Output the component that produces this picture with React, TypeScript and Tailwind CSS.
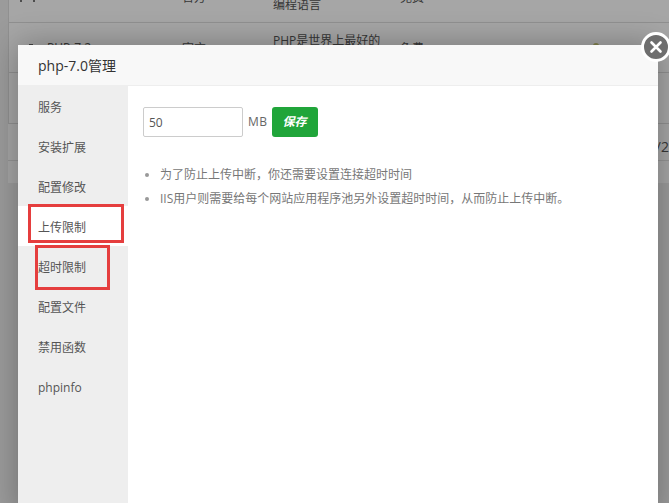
const FONT = "font-['Open_Sans','Noto_Sans_CJK_SC',sans-serif]";

const menu = ["服务", "安装扩展", "配置修改", "上传限制", "超时限制", "配置文件", "禁用函数", "phpinfo"];

export default function App() {
  return (
    <div className={`relative h-[503px] w-[669px] overflow-hidden bg-[#eeeeee] ${FONT}`}>
      {/* page behind the dialog */}
      <div className="ml-2 h-[183px] w-[700px] bg-white">
        <div className="h-[124px] w-full border-b border-l border-[#ddd] text-xs text-[#555]">
          <div className="grid h-[23px] grid-cols-[135px_91px_127px_1fr] items-start border-b border-[#ddd] pl-[38px]">
            <span className="-ml-[27px] flex gap-[11px] pt-0">
              <span className="h-[2px] w-[2px] bg-[#777]" />
              <span className="h-[2px] w-[2px] bg-[#777]" />
            </span>
            <span className="-mt-[10px]">官方</span>
            <span className="-mt-[3px] leading-[16px]">编程语言</span>
            <span className="-mt-[10px]">免费</span>
          </div>
          <div className="relative grid h-[50px] grid-cols-[135px_91px_127px_1fr] items-start border-b border-[#ddd] pl-[38px] pt-[10px]">
            <span className="pt-[7px]">PHP-7.2</span>
            <span className="pt-[8px]">官方</span>
            <span className="leading-[16px]">PHP是世界上最好的</span>
            <span className="pt-[8px]">免费</span>
            <span className="absolute left-[584px] top-[20px] h-[4px] w-[6px] rounded-t-full bg-[#c8c878]" />
            <span className="absolute left-[20px] top-[21px] h-px w-[4px] bg-[#666]" />
          </div>
        </div>
        <div className="w-[661px] pt-[16px] text-right text-sm leading-[14px] text-[#555]">/2</div>
        <div className="mt-[6px] h-px w-full bg-[#e4e4e4]" />
      </div>

      {/* layer shade */}
      <div className="absolute inset-0 bg-black/35" />

      {/* dialog */}
      <div className="absolute left-[18px] top-[45px] flex h-[470px] w-[640px] flex-col bg-white shadow-[0_0_30px_rgba(0,0,0,0.3)]">
        <div className="flex h-[41px] shrink-0 items-center border-b border-[#eee] bg-[#f8f8f8] pl-5 pt-[2px] text-sm text-[#333]">
          php-7.0管理
        </div>
        <div className="flex min-h-0 flex-1">
          <div className="w-[110px] shrink-0 bg-[#eee]">
            {menu.map((m) => (
              <div
                key={m}
                className={`flex h-10 items-center pl-5 pt-[4px] text-xs text-[#555] ${m === "上传限制" ? "bg-white" : ""}`}
              >
                {m}
              </div>
            ))}
          </div>
          <div className="flex-1 pl-[15px] pt-[21px]">
            <div className="flex items-center">
              <input
                readOnly
                value="50"
                className={`h-[30px] w-[100px] rounded-[2px] border border-[#ccc] px-[5px] text-xs text-[#555] outline-none ${FONT}`}
              />
              <span className="ml-[5px] text-xs tracking-[0.5px] text-[#666]">MB</span>
              <button className="ml-1 h-[30px] w-[46px] rounded-[3px] bg-[#20a53a] text-xs font-bold italic text-white">
                保存
              </button>
            </div>
            <ul className="mt-[26px] list-disc pl-[17px] text-xs leading-6 text-[#777] marker:text-[#999]">
              <li>为了防止上传中断，你还需要设置连接超时时间</li>
              <li>IIS用户则需要给每个网站应用程序池另外设置超时时间，从而防止上传中断。</li>
            </ul>
          </div>
        </div>
      </div>

      {/* close button */}
      <div className="absolute left-[641px] top-[32px] flex h-[30px] w-[30px] items-center justify-center rounded-full border-[3px] border-white bg-[#6e6e6e]">
        <svg width="14" height="14" viewBox="0 0 14 14" fill="none" stroke="white" strokeWidth="2.6" strokeLinecap="round">
          <path d="M2.5 2.5 11.5 11.5M11.5 2.5 2.5 11.5" />
        </svg>
      </div>

      {/* annotation boxes */}
      <div className="absolute left-[28px] top-[204px] h-[39px] w-[96px] border-[3px] border-[#e53e3e]" />
      <div className="absolute left-[35px] top-[245px] h-[45px] w-[75px] border-[3px] border-[#e53e3e]" />
    </div>
  );
}
